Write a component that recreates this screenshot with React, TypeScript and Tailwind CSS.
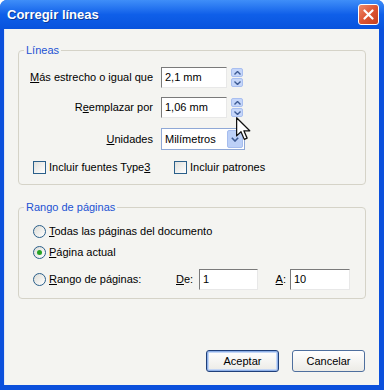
import React from 'react';

const U: React.FC<{ children: React.ReactNode }> = ({ children }) => (
  <span className="underline underline-offset-[1px]">{children}</span>
);

const TextBox: React.FC<{ value: string; className?: string }> = ({ value, className }) => (
  <div
    className={`h-[21px] bg-white border border-t-[#7a7a7a] border-l-[#7a7a7a] border-r-[#e8e8e8] border-b-[#e8e8e8] pl-[3px] flex items-center ${className ?? ''}`}
  >
    {value}
  </div>
);

const Spinner: React.FC = () => (
  <div className="ml-[4px] w-[12px] h-[19px] flex flex-col gap-px">
    <div className="flex-1 rounded-[2px] bg-[#c5d6fa] border border-[#a9bff0] flex items-center justify-center">
      <svg width="7" height="4" viewBox="0 0 7 4">
        <path d="M0.5 3.5 L3.5 0.5 L6.5 3.5" fill="none" stroke="#3d5a93" strokeWidth="1.4" />
      </svg>
    </div>
    <div className="flex-1 rounded-[2px] bg-[#c5d6fa] border border-[#a9bff0] flex items-center justify-center">
      <svg width="7" height="4" viewBox="0 0 7 4">
        <path d="M0.5 0.5 L3.5 3.5 L6.5 0.5" fill="none" stroke="#3d5a93" strokeWidth="1.4" />
      </svg>
    </div>
  </div>
);

const Check: React.FC = () => (
  <div className="w-[13px] h-[13px] border border-[#2a5f8a] bg-gradient-to-br from-[#e0e0dc] to-white shrink-0" />
);

const Radio: React.FC<{ checked?: boolean }> = ({ checked }) => (
  <div className="w-[13px] h-[13px] rounded-full border border-[#2a5f8a] bg-gradient-to-br from-[#dcdcd6] to-white flex items-center justify-center shrink-0">
    {checked && <div className="w-[5px] h-[5px] rounded-full bg-[#25a325]" />}
  </div>
);

const XpButton: React.FC<{ label: string; primary?: boolean }> = ({ label, primary }) => (
  <button
    className={`w-[73px] h-[22px] rounded-[3px] border bg-gradient-to-b from-white to-[#ecebe6] text-[11px] text-black ${
      primary
        ? 'border-[#1f3f7a] shadow-[inset_0_0_0_1px_#8eb0e8,inset_0_0_0_2px_#c4d6f5]'
        : 'border-[#4e6f9e]'
    }`}
  >
    {label}
  </button>
);

export default function App() {
  return (
    <div className="relative w-[384px] h-[390px] bg-white font-['Liberation_Sans',Arial,sans-serif] text-[11px] leading-[13px] text-black">
      <div className="h-full flex flex-col rounded-t-[7px] bg-[#0b50dc] pb-[5px]">
        {/* title bar */}
        <div className="h-[29px] shrink-0 rounded-t-[7px] bg-gradient-to-b from-[#3f8ef8] via-[#0f5fe9] to-[#0853dd] flex items-center justify-between pl-[7px] pr-[5px]">
          <span className="text-white font-bold text-[13px] leading-none [text-shadow:1px_1px_0_#0a3a9a]">
            Corregir líneas
          </span>
          <div className="w-[21px] h-[21px] rounded-[3px] border border-white bg-gradient-to-br from-[#ee8a6a] via-[#dd5432] to-[#c4401f] flex items-center justify-center">
            <svg width="11" height="11" viewBox="0 0 11 11">
              <path d="M1.5 1.5 L9.5 9.5 M9.5 1.5 L1.5 9.5" stroke="white" strokeWidth="2.2" strokeLinecap="round" />
            </svg>
          </div>
        </div>

        {/* client area */}
        <div className="flex-1 ml-[4px] mr-[5px] bg-[#f4f4f1] border-l border-[#dfe6f5] flex flex-col">
          <fieldset className="mt-[15px] ml-[13px] mr-[13px] border border-[#d5d3c8] rounded-[4px] px-0 pb-[10px]">
            <legend className="ml-[5px] px-[2px] text-[#1c52d3]">Líneas</legend>
            <div className="pt-[10px] flex flex-col">
              <div className="flex items-center">
                <div className="w-[134px] text-right mr-[8px]">
                  <U>M</U>ás estrecho o igual que
                </div>
                <TextBox value="2,1 mm" className="w-[66px]" />
                <Spinner />
              </div>
              <div className="flex items-center mt-[9px]">
                <div className="w-[134px] text-right mr-[8px]">
                  R<U>e</U>emplazar por
                </div>
                <TextBox value="1,06 mm" className="w-[66px]" />
                <Spinner />
              </div>
              <div className="flex items-center mt-[10px]">
                <div className="w-[134px] text-right mr-[8px]">
                  <U>U</U>nidades
                </div>
                <div className="w-[84px] h-[22px] bg-white border border-[#8fa8d6] flex items-center justify-between pl-[3px] pr-px">
                  <span>Milímetros</span>
                  <div className="w-[16px] h-[18px] rounded-[2px] bg-[#bcd0f7] border border-[#a6bdee] flex items-center justify-center">
                    <svg width="8" height="5" viewBox="0 0 8 5">
                      <path d="M0.8 0.8 L4 4 L7.2 0.8" fill="none" stroke="#3d5a93" strokeWidth="1.6" />
                    </svg>
                  </div>
                </div>
              </div>
              <div className="flex items-center mt-[11px] pl-[14px]">
                <div className="w-[141px] flex items-center gap-[3px]">
                  <Check />
                  <span>
                    Incluir fuentes Type<U>3</U>
                  </span>
                </div>
                <div className="flex items-center gap-[3px]">
                  <Check />
                  <span>Incluir patrones</span>
                </div>
              </div>
            </div>
          </fieldset>

          <fieldset className="mt-[16px] ml-[13px] mr-[13px] border border-[#d5d3c8] rounded-[4px] px-0 pb-[8px]">
            <legend className="ml-[5px] px-[2px] text-[#1c52d3]">Rango de páginas</legend>
            <div className="pt-[11px] pl-[14px] flex flex-col">
              <div className="flex items-center gap-[3px]">
                <Radio />
                <span>
                  <U>T</U>odas las páginas del documento
                </span>
              </div>
              <div className="flex items-center gap-[3px] mt-[8px]">
                <Radio checked />
                <span>
                  <U>P</U>ágina actual
                </span>
              </div>
              <div className="flex items-center mt-[10px]">
                <div className="w-[143px] flex items-center gap-[3px]">
                  <Radio />
                  <span>
                    <U>R</U>ango de páginas:
                  </span>
                </div>
                <div className="w-[23px]">
                  <U>D</U>e:
                </div>
                <TextBox value="1" className="w-[59px]" />
                <div className="w-[32px] text-right pr-[4px]">
                  <U>A</U>:
                </div>
                <TextBox value="10" className="w-[60px]" />
              </div>
            </div>
          </fieldset>

          <div className="flex-1" />
          <div className="flex justify-end gap-[13px] pr-[14px] pb-[13px]">
            <XpButton label="Aceptar" primary />
            <XpButton label="Cancelar" />
          </div>
        </div>
      </div>

      {/* mouse pointer */}
      <svg className="absolute left-[236px] top-[117px]" width="15" height="24" viewBox="0 0 12 19">
        <path
          d="M0.5 0.5 L0.5 15 L4 11.7 L6.6 17.8 L8.9 16.8 L6.3 10.9 L11 10.9 Z"
          fill="white"
          stroke="#111"
          strokeWidth="1"
          strokeLinejoin="round"
        />
      </svg>
    </div>
  );
}
